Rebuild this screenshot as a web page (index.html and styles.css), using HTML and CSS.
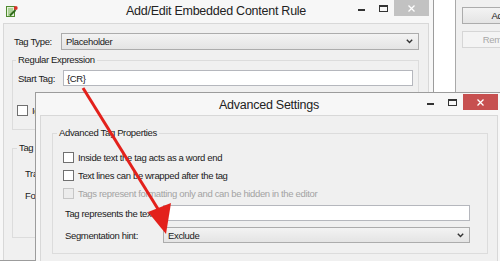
FILE: index.html
```html
<!DOCTYPE html>
<html lang="en">
<head>
    <meta charset="UTF-8">
    <title>Add/Edit Embedded Content Rule</title>
    <link rel="stylesheet" href="styles.css">
</head>
<body>
    <div class="desktop">
        <div class="window back">
            <div class="titlebar">
                <svg class="app-icon" width="13" height="13" viewBox="0 0 13 13">
                    <rect x="1.5" y="1.5" width="8" height="10" fill="#e6f2da" stroke="#4f8a2f"/>
                    <path d="M3 4h5M3 6h5M3 8h5M3 10h3" stroke="#79b35a"/>
                    <path d="M5 10.5l5.5-5.5" stroke="#2f6b1c" stroke-width="2"/>
                    <circle cx="10.8" cy="3" r="1.9" fill="#d9302a"/>
                </svg>
                <span class="title">Add/Edit Embedded Content Rule</span>
                <div class="controls">
                    <span class="ctl"><span class="min-glyph"></span></span>
                    <span class="ctl"><span class="max-glyph"></span></span>
                    <span class="ctl close">
                        <svg width="7" height="7" viewBox="0 0 7 7"><path d="M0.5 0.5l6 6M6.5 0.5l-6 6" stroke="#fff" stroke-width="1.3"/></svg>
                    </span>
                </div>
            </div>
            <div class="client">
                <div class="row tag-type">
                    <label class="lbl-type">Tag Type:</label>
                    <div class="select type-select">
                        <span>Placeholder</span>
                        <svg width="7" height="5" viewBox="0 0 7 5"><path d="M0.8 0.8l2.7 2.7 2.7-2.7" fill="none" stroke="#333" stroke-width="1.4"/></svg>
                    </div>
                </div>

                <div class="group regex">
                    <div class="legend">Regular Expression</div>
                    <div class="row start-row">
                        <label class="lbl-start">Start Tag:</label>
                        <div class="input start-input">{CR}</div>
                    </div>
                    <div class="check regex-check"><span class="box"></span>Ignore case</div>
                </div>

                <div class="group tag">
                    <div class="legend">Tag Properties</div>
                    <div class="row tag-row">Translate:</div>
                    <div class="row tag-row second">Formatting:</div>
                </div>
            </div>
        </div>

        <div class="side">
            <div class="list"></div>
            <div class="buttons">
                <div class="btn">Add</div>
                <div class="btn disabled">Remove</div>
            </div>
        </div>
    </div>

    <div class="window front">
        <div class="titlebar">
            <span></span>
            <span class="title">Advanced Settings</span>
            <div class="controls">
                <span class="ctl"><span class="min-glyph"></span></span>
                <span class="ctl"><span class="max-glyph"></span></span>
                <span class="ctl close active">
                    <svg width="7" height="7" viewBox="0 0 7 7"><path d="M0.5 0.5l6 6M6.5 0.5l-6 6" stroke="#fff" stroke-width="1.3"/></svg>
                </span>
            </div>
        </div>
        <div class="client">
            <div class="group props">
                <div class="legend">Advanced Tag Properties</div>
                <div class="check first-check"><span class="box"></span>Inside text the tag acts as a word end</div>
                <div class="check"><span class="box"></span>Text lines can be wrapped after the tag</div>
                <div class="check disabled"><span class="box"></span>Tags represent formatting only and can be hidden in the editor</div>

                <div class="row field first-field">
                    <label class="lbl-field">Tag represents the text:</label>
                    <div class="input field-box"></div>
                </div>
                <div class="row field second-field">
                    <label class="lbl-field">Segmentation hint:</label>
                    <div class="select field-box">
                        <span>Exclude</span>
                        <svg width="7" height="5" viewBox="0 0 7 5"><path d="M0.8 0.8l2.7 2.7 2.7-2.7" fill="none" stroke="#333" stroke-width="1.4"/></svg>
                    </div>
                </div>
            </div>
        </div>
    </div>

    <svg class="arrow" width="500" height="261" viewBox="0 0 500 261">
        <line x1="83" y1="88" x2="158" y2="209" stroke="#e3211c" stroke-width="3"/>
        <polygon points="148,212 171,203 166,234" fill="#e3211c"/>
    </svg>
</body>
</html>
```

FILE: styles.css
```css
* {
    box-sizing: border-box;
}

body {
    margin: 0;
    width: 500px;
    height: 261px;
    overflow: hidden;
    position: relative;
    background-color: #f0f0f0;
    font-family: "Liberation Sans", Arial, sans-serif;
    font-size: 9.5px;
    letter-spacing: -0.35px;
    color: #1a1a1a;
}

.desktop {
    display: flex;
    height: 261px;
}

/* window chrome */

.window {
    background-color: #f7f7f7;
    border: 1px solid #9c9c9c;
    padding: 0 4px;
}

.back {
    width: 436px;
    margin-left: -2px;
    border-top: none;
    flex-shrink: 0;
    display: flex;
    flex-direction: column;
}

.front {
    position: absolute;
    left: 35px;
    top: 92px;
    width: 468px;
    height: 190px;
}

.titlebar {
    display: grid;
    grid-template-columns: 1fr auto 1fr;
    align-items: start;
    height: 23px;
}

.front .titlebar {
    height: 22px;
}

.app-icon {
    margin: 5px 0 0 2px;
}

.title {
    font-size: 12.5px;
    letter-spacing: -0.25px;
    line-height: 23px;
    color: #222;
}

.front .title {
    padding-top: 1px;
}

.controls {
    justify-self: end;
    display: flex;
}

.front .controls {
    margin-top: 1px;
}

.ctl {
    width: 22px;
    height: 16px;
    display: flex;
    align-items: center;
    justify-content: center;
}

.min-glyph {
    width: 7px;
    height: 2px;
    margin-top: 4px;
    background-color: #333;
}

.max-glyph {
    width: 9px;
    height: 7px;
    border: 1px solid #333;
    border-top-width: 2px;
}

.close {
    width: 35px;
    background-color: #c2c2c2;
}

.close.active {
    background-color: #c75050;
}

.client {
    flex: 1;
    background-color: #f0f0f0;
    border: 1px solid #d8d8d8;
    border-bottom: none;
}

.back .client {
    padding-top: 9px;
}

.front .client {
    height: 168px;
    padding-top: 17px;
}

/* form controls */

.row {
    display: flex;
    align-items: center;
}

label {
    flex-shrink: 0;
}

.select {
    display: flex;
    align-items: center;
    justify-content: space-between;
    padding: 0 5px 0 4px;
    border: 1px solid #acacac;
    background: linear-gradient(#f3f3f3, #e4e4e4);
}

.input {
    display: flex;
    align-items: center;
    padding: 0 3px;
    border: 1px solid #b5b7bd;
    background-color: #fff;
}

.check {
    display: flex;
    align-items: center;
    height: 18px;
}

.box {
    flex-shrink: 0;
    width: 11px;
    height: 11px;
    margin-right: 4px;
    border: 1px solid #707070;
    background-color: #fff;
}

.check.disabled {
    color: #a3a3a3;
}

.check.disabled .box {
    border-color: #c6c6c6;
    background-color: #ececec;
}

/* group boxes: the caption sits on the top border */

.group {
    border: 1px solid #dcdcdc;
}

.legend {
    width: max-content;
    margin-top: -7px;
    padding: 0 2px;
    line-height: 12px;
    background-color: #f0f0f0;
}

/* back dialog */

.tag-type {
    margin-left: 10px;
    height: 17px;
}

.lbl-type {
    width: 47px;
}

.type-select {
    width: 358px;
    height: 17px;
}

.regex {
    width: 407px;
    margin: 10px 0 0 8px;
    padding: 0 5px 10px 5px;
}

.regex .legend {
    margin-left: -2px;
}

.start-row {
    margin-top: 4px;
}

.lbl-start {
    width: 45px;
}

.start-input {
    width: 350px;
    height: 16px;
}

.regex-check {
    margin: 15px 0 0 -1px;
}

.tag {
    width: 407px;
    margin: 18px 0 0 8px;
    padding: 0 12px 33px 12px;
}

.tag .legend {
    margin-left: -8px;
}

.tag-row {
    height: 18px;
    margin-top: 10px;
}

.tag-row.second {
    margin-top: 4px;
}

/* neighbouring window */

.side {
    display: flex;
    align-items: flex-start;
}

.list {
    width: 22px;
    height: 94px;
    background-color: #fff;
    border-right: 1px solid #a9a9a9;
    border-bottom: 1px solid #a9a9a9;
}

.buttons {
    display: flex;
    flex-direction: column;
    gap: 7px;
    margin-left: 6px;
    padding-top: 7px;
}

.btn {
    width: 75px;
    height: 17px;
    line-height: 15px;
    text-align: center;
    border: 1px solid #acacac;
    background: linear-gradient(#f3f3f3, #e4e4e4);
}

.btn.disabled {
    color: #a8a8a8;
    border-color: #d6d6d6;
    background: #f4f4f4;
}

/* advanced settings */

.props {
    width: 436px;
    margin-left: 11px;
    padding: 0 10px 10px 10px;
}

.props .legend {
    margin-left: -6px;
}

.first-check {
    margin-top: 9px;
}

.field {
    height: 16px;
}

.first-field {
    margin-top: 3px;
}

.second-field {
    margin-top: 6px;
}

.lbl-field {
    width: 98px;
    margin-left: 2px;
}

.field-box {
    width: 307px;
    height: 16px;
}

.arrow {
    position: absolute;
    left: 0;
    top: 0;
    pointer-events: none;
}
```
